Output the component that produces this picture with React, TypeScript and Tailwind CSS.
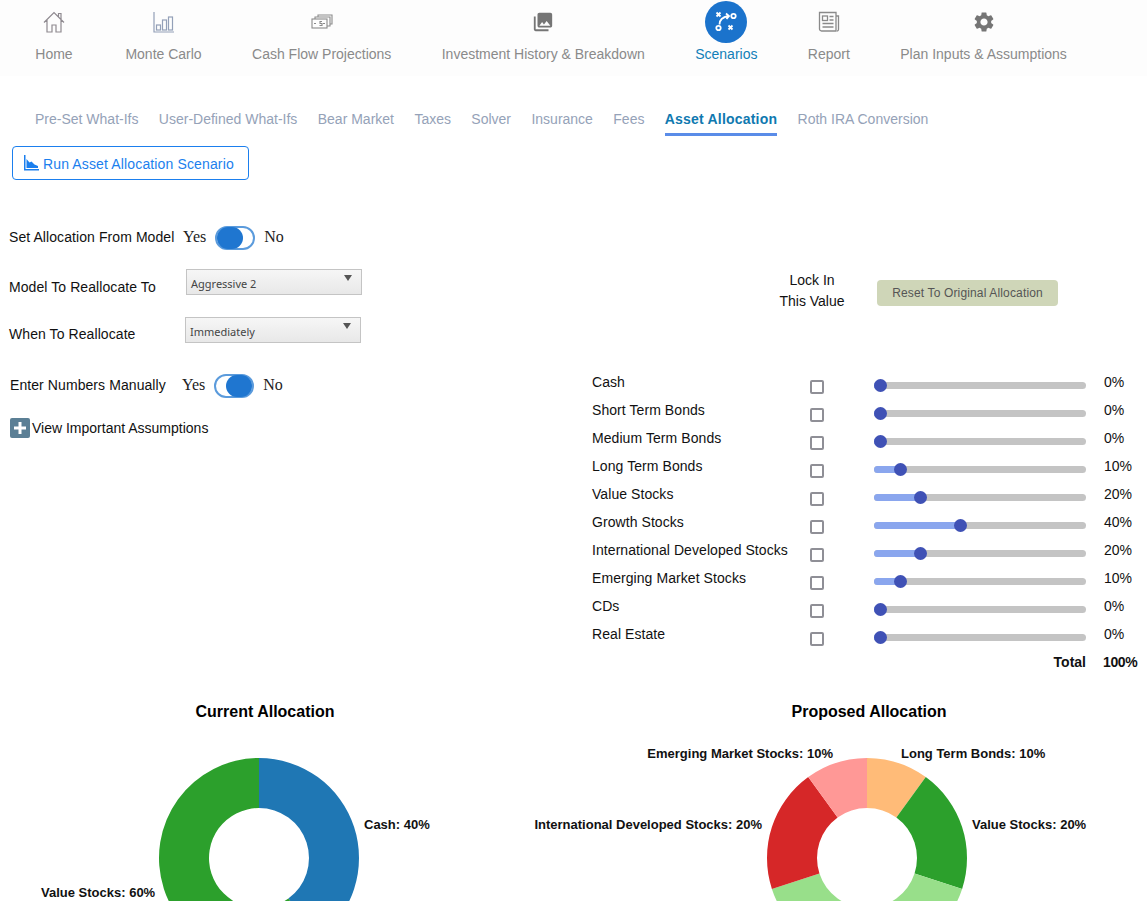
import React from 'react';
import { MdPhotoLibrary, MdSettings } from 'react-icons/md';

const sans = { fontFamily: '"Liberation Sans", Arial, sans-serif' };

const HomeIcon = () => (
  <svg width="22" height="22" viewBox="0 0 22 22" fill="none" stroke="#8f8a90" strokeWidth="1.2">
    <path d="M1 11.500 11 1.500 21 11.500M4 8.500V21h5v-7h4v7h5V8.500M15.500 5.500V2.500h2.500v6" />
  </svg>
);

const BarsIcon = () => (
  <svg width="22" height="22" viewBox="0 0 22 22" fill="none" stroke="#93a0b8" strokeWidth="1.2">
    <path d="M1 1v20h20" />
    <rect x="3.500" y="14" width="4" height="5" />
    <rect x="9.500" y="9" width="4" height="10" />
    <rect x="15.500" y="6" width="4" height="13" />
  </svg>
);

const CashIcon = () => (
  <svg width="22" height="22" viewBox="0 0 22 22" fill="none" stroke="#8b8b8b" strokeWidth="1.1">
    <rect x="1" y="8" width="15" height="9" />
    <path d="M4 8V6h15v9h-3M7 6V4h14v9h-2" />
    <path d="M3 12.500h2M12 12.500h2M8.500 14.500h2.500v-2h-2v-2H11" />
  </svg>
);

const ReportIcon = () => (
  <svg width="22" height="22" viewBox="0 0 22 22" fill="none" stroke="#8a8a8a" strokeWidth="1.3">
    <path d="M1.500 1.500h16.500v18.500H3.500a2 2 0 0 1-2-2zM18 5h2.500v13.500a1.500 1.500 0 0 1-1.500 1.500" />
    <rect x="4.500" y="5" width="5" height="4.500" />
    <path d="M11.500 5.500h4M11.500 9h4M4.500 12.500h11M4.500 16h11" />
  </svg>
);

const TacticIcon = () => (
  <svg width="22" height="22" viewBox="0 0 22 22" fill="none" stroke="#fff" strokeWidth="1.8">
    <path d="M1.500 1.500l4 4M5.500 1.500l-4 4M13.500 14.500l4 4M17.500 14.500l-4 4" />
    <circle cx="18.500" cy="5" r="2.200" />
    <circle cx="3.500" cy="17" r="2.200" />
    <path d="M4.500 13.500c0-4 3-7.500 9-8.500M11 2.500l3 2.500-2.500 3" />
  </svg>
);

const navItems = [
  { label: 'Home', icon: <HomeIcon /> },
  { label: 'Monte Carlo', icon: <BarsIcon /> },
  { label: 'Cash Flow Projections', icon: <CashIcon /> },
  { label: 'Investment History & Breakdown', icon: <MdPhotoLibrary size={22} color="#757575" /> },
  { label: 'Scenarios', icon: <TacticIcon />, active: true },
  { label: 'Report', icon: <ReportIcon /> },
  { label: 'Plan Inputs & Assumptions', icon: <MdSettings size={24} color="#757575" /> },
];

const tabs = ['Pre-Set What-Ifs', 'User-Defined What-Ifs', 'Bear Market', 'Taxes', 'Solver', 'Insurance', 'Fees', 'Asset Allocation', 'Roth IRA Conversion'];

const assets = [
  { name: 'Cash', pct: 0 },
  { name: 'Short Term Bonds', pct: 0 },
  { name: 'Medium Term Bonds', pct: 0 },
  { name: 'Long Term Bonds', pct: 10 },
  { name: 'Value Stocks', pct: 20 },
  { name: 'Growth Stocks', pct: 40 },
  { name: 'International Developed Stocks', pct: 20 },
  { name: 'Emerging Market Stocks', pct: 10 },
  { name: 'CDs', pct: 0 },
  { name: 'Real Estate', pct: 0 },
];

const Toggle = ({ on }: { on: 'left' | 'right' }) => (
  <div className={`ml-px flex h-6 w-10 items-center rounded-full border-2 border-[#5b9bdc] bg-white ${on === 'left' ? 'justify-start' : 'justify-end'}`}>
    <div className="h-[22px] w-[26px] rounded-full bg-[#1f76d0]" />
  </div>
);

const YesNo = ({ on }: { on: 'left' | 'right' }) => (
  <div className="flex items-center gap-2 font-['Liberation_Serif',serif] text-base text-[#222]">
    <span className="pb-[2px]">Yes</span>
    <Toggle on={on} />
    <span className="ml-px pb-[2px]">No</span>
  </div>
);

const Select = ({ value }: { value: string }) => (
  <div className="flex h-[26px] w-[176px] items-start justify-between border border-[#c4c4c4] bg-gradient-to-b from-[#f6f6f6] to-[#e8e8e8] pl-1 pr-[9px] pt-[6px] font-['Noto_Sans',sans-serif] text-[11px] leading-4 text-[#444]">
    <span>{value}</span>
    <span className="-mt-px h-0 w-0 border-x-[4px] border-t-[6px] border-x-transparent border-t-[#555]" />
  </div>
);

const AssetRow = ({ name, pct }: { name: string; pct: number }) => (
  <div className="flex h-7 items-start text-sm text-[#111]">
    <div className="w-[218px] whitespace-nowrap pt-[5px] tracking-[0.07px]">{name}</div>
    <div className="w-[64px] pt-[13px]">
      <div className="h-3.5 w-3.5 rounded-[2px] border-2 border-[#8f8f96] bg-white" />
    </div>
    <div className="relative mt-[15px] h-[7px] w-[212px] rounded-full bg-[#c4c4c4]">
      <div className="h-full rounded-full bg-[#8aa6ee]" style={{ width: 6 + pct * 2 }} />
      <div className="absolute -top-[3px] h-[13px] w-[13px] rounded-full bg-[#3f51b5]" style={{ left: pct * 2 }} />
    </div>
    <div className="ml-[18px] pt-[5px]">{pct}%</div>
  </div>
);

// donut slices, clockwise from 12 o'clock
const arc = (start: number, end: number) => {
  const pt = (r: number, p: number) => {
    const a = (p / 100) * 2 * Math.PI;
    return `${(r * Math.sin(a)).toFixed(2)} ${(-r * Math.cos(a)).toFixed(2)}`;
  };
  const large = end - start > 50 ? 1 : 0;
  return `M${pt(100, start)}A100 100 0 ${large} 1 ${pt(100, end)}L${pt(50, end)}A50 50 0 ${large} 0 ${pt(50, start)}Z`;
};

const Donut = ({ slices, cx, cy }: { slices: { from: number; to: number; color: string }[]; cx: number; cy: number }) => (
  <g transform={`translate(${cx} ${cy})`}>
    {slices.map((s) => (
      <path key={s.from} d={arc(s.from, s.to)} fill={s.color} />
    ))}
  </g>
);

const chartText = 'fill-[#111] text-[13px] font-bold';

export default function App() {
  return (
    <div className="h-[901px] w-full overflow-hidden bg-white" style={sans}>
      <nav className="flex h-[76px] items-start gap-[50.4px] bg-[#fdfdfd] pl-[33px] pt-[1px]">
        {navItems.map((item) => (
          <div key={item.label} className={`flex flex-col items-center text-sm ${item.active ? 'text-[#1180b8]' : 'text-[#8a8a8a]'}`}>
            <div className={`flex h-[42px] w-[42px] items-center justify-center rounded-full ${item.active ? 'bg-[#1b73cc]' : ''}`}>{item.icon}</div>
            <span className="mt-[1px] whitespace-nowrap">{item.label}</span>
          </div>
        ))}
      </nav>

      <div className="flex h-[60px] items-end gap-[20.4px] pl-[35px] text-sm text-[#95a2b8]">
        {tabs.map((t) =>
          t === 'Asset Allocation' ? (
            <div key={t} className="border-b-[3px] border-[#5a8ce8] pb-[4px] font-bold tracking-[0.2px] text-[#0f79b0]">{t}</div>
          ) : (
            <div key={t} className="pb-[7px]">{t}</div>
          ),
        )}
      </div>

      <button className="ml-3 mt-[10px] flex h-[34px] w-[237px] items-center gap-1 rounded border border-[#1b7fee] pl-2.5 pt-[2px] text-sm tracking-[0.14px] text-[#1b7fee]">
        <svg width="16" height="16" viewBox="0 0 16 16" fill="currentColor" className="-mt-[2px]">
          <path d="M1 0h1.500v14H16v1.500H1z" />
          <path d="M3.500 13V4l3 3.500 2-1 3 3 3.500 1.500v2z" />
        </svg>
        Run Asset Allocation Scenario
      </button>

      <div className="flex">
        <div className="w-[592px] shrink-0 pl-[9px] text-sm text-[#111]">
          <div className="mt-[46px] flex h-6 items-center">
            <span className="w-[174px] pb-[2px] tracking-[0.08px]">Set Allocation From Model</span>
            <YesNo on="left" />
          </div>
          <div className="mt-[19px] flex items-start">
            <span className="w-[177px] pt-[8px] tracking-[0.08px]">Model To Reallocate To</span>
            <Select value="Aggressive 2" />
          </div>
          <div className="mt-[20px] flex items-start">
            <span className="w-[176px] pt-[7px] tracking-[0.08px]">When To Reallocate</span>
            <Select value="Immediately" />
          </div>
          <div className="ml-px mt-[30px] flex h-6 items-center">
            <span className="w-[172px] pb-[2px] tracking-[0.08px]">Enter Numbers Manually</span>
            <YesNo on="right" />
          </div>
          <div className="ml-px mt-[20px] flex items-center gap-[2px]">
            <div className="flex h-5 w-5 items-center justify-center rounded-[2px] bg-[#5b7f95]">
              <svg width="12" height="12" viewBox="0 0 12 12" fill="#fff"><path d="M4.500 0h3v4.500H12v3H7.500V12h-3V7.500H0v-3h4.500z" /></svg>
            </div>
            <span>View Important Assumptions</span>
          </div>
        </div>

        <div className="flex-1 text-sm text-[#111]">
          <div className="flex pt-[90px]">
            <div className="ml-[180px] w-[80px] text-center leading-[21px]">Lock In<br />This Value</div>
            <button className="ml-[25px] mt-[10px] h-[26px] w-[181px] rounded bg-[#cfd6b8] text-xs tracking-[0.15px] text-[#555]">Reset To Original Allocation</button>
          </div>
          <div className="mt-[55px]">
            {assets.map((a) => (
              <AssetRow key={a.name} name={a.name} pct={a.pct} />
            ))}
          </div>
          <div className="mt-[3px] flex h-6 items-center font-bold">
            <span className="w-[494px] text-right">Total</span>
            <span className="ml-[17px] tracking-[-0.4px]">100%</span>
          </div>
        </div>
      </div>

      <div className="mt-[26px] flex text-base font-bold text-black">
        <div className="w-[530px] shrink-0 text-center">Current Allocation</div>
        <div className="ml-[61px] w-[556px] shrink-0 text-center">Proposed Allocation</div>
      </div>

      <svg width="1147" height="220" viewBox="0 0 1147 220" className="mt-[10px]" style={sans}>
        <Donut cx={259} cy={124} slices={[{ from: 0, to: 40, color: '#1f77b4' }, { from: 40, to: 100, color: '#2ca02c' }]} />
        <text x="364" y="95" className={chartText}>Cash: 40%</text>
        <text x="41" y="163" className={chartText}>Value Stocks: 60%</text>

        <Donut
          cx={867}
          cy={124}
          slices={[
            { from: 0, to: 10, color: '#ffbb78' },
            { from: 10, to: 30, color: '#2ca02c' },
            { from: 30, to: 70, color: '#98df8a' },
            { from: 70, to: 90, color: '#d62728' },
            { from: 90, to: 100, color: '#ff9896' },
          ]}
        />
        <text x="833" y="24" textAnchor="end" className={chartText}>Emerging Market Stocks: 10%</text>
        <text x="901" y="24" className={chartText}>Long Term Bonds: 10%</text>
        <text x="762" y="95" textAnchor="end" className={chartText}>International Developed Stocks: 20%</text>
        <text x="972" y="95" className={chartText}>Value Stocks: 20%</text>
      </svg>
    </div>
  );
}
